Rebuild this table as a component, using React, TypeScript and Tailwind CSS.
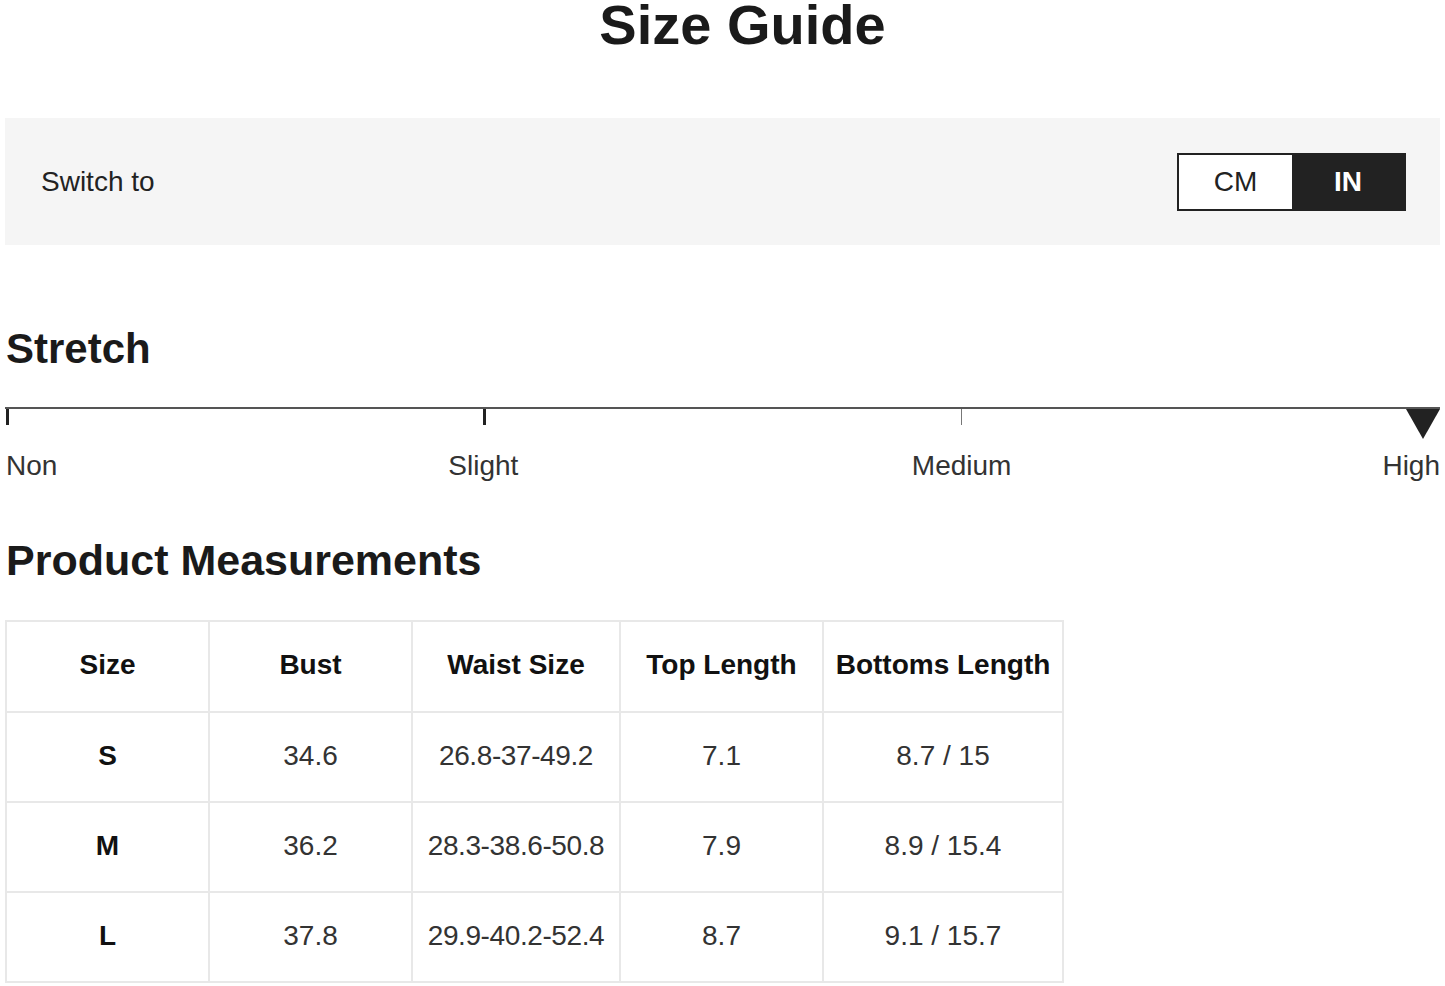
const rows = [
  { size: "S", bust: "34.6", waist: "26.8-37-49.2", top: "7.1", bottoms: "8.7 / 15" },
  { size: "M", bust: "36.2", waist: "28.3-38.6-50.8", top: "7.9", bottoms: "8.9 / 15.4" },
  { size: "L", bust: "37.8", waist: "29.9-40.2-52.4", top: "8.7", bottoms: "9.1 / 15.7" },
];

const headers = ["Size", "Bust", "Waist Size", "Top Length", "Bottoms Length"];

export default function App() {
  return (
    <div className="min-h-screen w-full overflow-hidden bg-white px-[5px] font-['Liberation_Sans',Arial,sans-serif] text-[#222]">
      <h1 className="-mt-[3px] pl-[40px] text-center text-[56px] font-bold leading-[56px] text-[#1a1a1a]">Size Guide</h1>

      <div className="mt-[65px] flex h-[127px] items-center justify-between bg-[#f5f5f5] pl-[36px] pr-[34px]">
        <span className="text-[28px] leading-8 text-[#222]">Switch to</span>
        <div className="flex h-[58px] border-2 border-[#222]">
          <button className="w-[113px] bg-white text-[28px] text-[#222]">CM</button>
          <button className="w-[112px] bg-[#222] text-[28px] font-bold text-white">IN</button>
        </div>
      </div>

      <h2 className="mt-[83px] pl-px text-[42px] font-bold leading-[42px] text-[#1a1a1a]">Stretch</h2>

      <div className="relative mt-[37px] h-[2px] bg-[#555]">
        <span className="absolute left-[1px] top-[2px] h-[16px] w-[3px] bg-[#222]" />
        <span className="absolute left-[478px] top-[2px] h-[16px] w-[3px] bg-[#222]" />
        <span className="absolute left-[956px] top-[2px] h-[16px] w-px bg-[#777]" />
        <svg className="absolute right-0 top-[2px]" width="34" height="30" viewBox="0 0 34 30">
          <polygon points="0,0 34,0 17,30" fill="#222" />
        </svg>
      </div>

      <div className="mt-[41px] grid grid-cols-6 text-[28px] leading-8 text-[#333]">
        <span className="pl-px text-left">Non</span>
        <span className="col-span-2 text-center">Slight</span>
        <span className="col-span-2 text-center">Medium</span>
        <span className="text-right">High</span>
      </div>

      <h2 className="mt-[57px] pl-px text-[43px] font-bold leading-[42px] text-[#1a1a1a]">Product Measurements</h2>

      <table className="mt-[39px] w-[1057px] table-fixed border-collapse text-center text-[28px]">
        <colgroup>
          <col className="w-[203px]" />
          <col className="w-[203px]" />
          <col className="w-[208px]" />
          <col className="w-[203px]" />
          <col className="w-[240px]" />
        </colgroup>
        <thead>
          <tr className="h-[91px]">
            {headers.map((h) => (
              <th key={h} className="whitespace-nowrap border-2 border-[#e8e8e8] px-0 pb-[3px] font-bold text-[#111]">
                {h}
              </th>
            ))}
          </tr>
        </thead>
        <tbody>
          {rows.map((r) => (
            <tr key={r.size} className="h-[90px] text-[#333]">
              <td className="border-2 border-[#e8e8e8] pb-[3px] font-bold text-[#111]">{r.size}</td>
              <td className="border-2 border-[#e8e8e8] pb-[3px]">{r.bust}</td>
              <td className="whitespace-nowrap border-2 border-[#e8e8e8] pb-[3px] tracking-[-0.4px]">{r.waist}</td>
              <td className="border-2 border-[#e8e8e8] pb-[3px]">{r.top}</td>
              <td className="border-2 border-[#e8e8e8] pb-[3px]">{r.bottoms}</td>
            </tr>
          ))}
        </tbody>
      </table>
    </div>
  );
}
